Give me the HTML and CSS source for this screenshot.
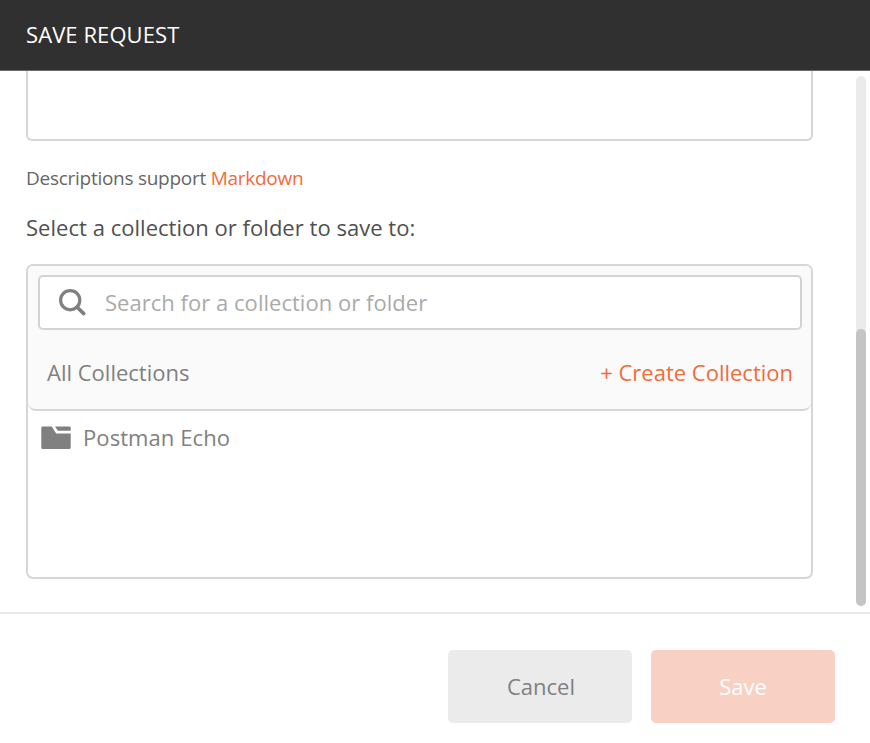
FILE: index.html
```html
<!DOCTYPE html>
<html lang="en">
<head>
<meta charset="utf-8">
<title>Save Request</title>
<link rel="stylesheet" href="styles.css">
</head>
<body>
<div class="modal">
  <header class="modal-header"><span class="title">SAVE REQUEST</span></header>
  <main class="modal-body">
    <div class="content">
      <div class="description"></div>
      <p class="hint"><span class="hint-text">Descriptions support</span> <a class="link">Markdown</a></p>
      <p class="label"><span>Select a collection or folder to save to:</span></p>
      <section class="picker">
        <div class="picker-head">
          <div class="search">
            <svg class="search-icon" width="28" height="28" viewBox="0 0 28 28"><circle cx="12.2" cy="11.2" r="9.6" fill="none" stroke="#808080" stroke-width="3.2"/><path d="M19 18L25.7 24.6" stroke="#808080" stroke-width="3.6" stroke-linecap="round"/></svg>
            <span class="placeholder">Search for a collection or folder</span>
          </div>
          <div class="picker-bar"><span class="all">All Collections</span><a class="create">+ Create Collection</a></div>
        </div>
        <div class="item">
          <svg width="30" height="24" viewBox="0 0 30 24" fill="#808080"><path d="M1.5 .5H10.8L15.2 7.4H29.7V21.8Q29.7 23 28.2 23H1.5Q.3 23 .3 21.8V1.7Q.3 .5 1.5 .5Z"/><path d="M14 .5H28.5Q29.7 .5 29.7 1.7V4.7H16.8Z"/></svg>
          <span class="item-name">Postman Echo</span>
        </div>
      </section>
    </div>
    <div class="scrollbar"><div class="thumb"></div></div>
  </main>
  <footer class="modal-footer">
    <div class="button cancel"><span>Cancel</span></div>
    <div class="button save"><span>Save</span></div>
  </footer>
</div>
</body>
</html>
```
FILE: styles.css
```css
* { box-sizing: border-box; }
body { margin: 0; font-family: "Open Sans", sans-serif; font-size: 22px; line-height: 30px; color: #808080; background: #fff; }
p { margin: 0; }
.modal { height: 743px; display: flex; flex-direction: column; overflow: hidden; }
.modal-header { height: 71px; flex: none; background: #303030; border-bottom: 1px solid #6b6b6b; color: #fff; padding: 19px 26px; }
.title { letter-spacing: 0.08px; }
.modal-body { height: 541px; flex: none; display: flex; justify-content: space-between; padding: 0 4px 0 26px; }
.content { width: 787px; }
.description { height: 70px; border: 2px solid #d6d6d6; border-top: 0; border-radius: 0 0 6px 6px; }
.hint { margin-top: 23px; height: 28px; line-height: 28px; font-size: 19px; letter-spacing: -0.27px; color: #666; white-space: nowrap; }
.link, .create { color: #f26b3a; }
.label { margin-top: 20px; height: 30px; color: #505050; letter-spacing: 0.03px; white-space: nowrap; }
.picker { margin-top: 22px; height: 315px; border: 2px solid #d6d6d6; border-radius: 7px; }
.picker-head { height: 145px; padding: 9px 9px 0 10px; background: #fafafa; border-bottom: 2px solid #d6d6d6; border-radius: 5px 5px 8px 8px; }
.search { height: 55px; display: flex; align-items: center; padding-left: 18px; background: #fff; border: 2px solid #d3d3d3; border-radius: 5px; }
.placeholder { margin: -2px 0 0 19px; color: #aaa; letter-spacing: 0.03px; }
.picker-bar { display: flex; justify-content: space-between; padding: 27px 9px 0 9px; }
.item { display: flex; align-items: center; height: 54px; padding-left: 13px; }
.item-name { margin: -3px 0 0 12px; letter-spacing: 0.08px; }
.scrollbar { width: 10px; height: 530px; margin-top: 5px; padding-top: 253px; background: #ebebeb; border-radius: 5px; }
.thumb { height: 277px; background: #c4c4c4; border-radius: 5px; }
.modal-footer { flex: 1; display: flex; justify-content: flex-end; gap: 19px; padding: 36px 35px 0 0; border-top: 2px solid #e9e9e9; }
.button { width: 184px; height: 73px; display: flex; align-items: center; justify-content: center; border-radius: 5px; padding-bottom: 2px; }
.cancel { background: #ebebeb; padding-left: 2px; }
.save { background: #f9d1c4; color: #fff; }
```
